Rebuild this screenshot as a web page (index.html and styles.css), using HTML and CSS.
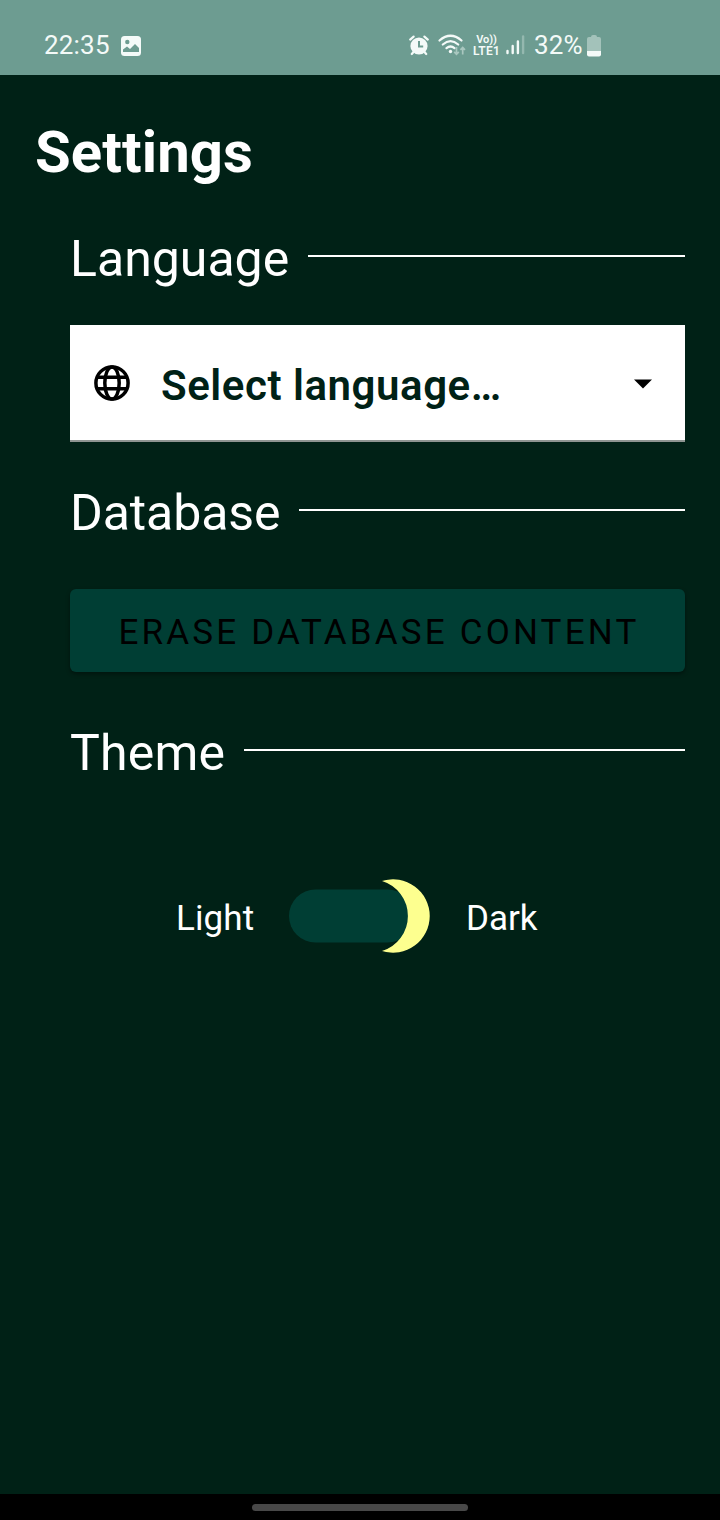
FILE: index.html
```html
<!DOCTYPE html>
<html lang="en">
<head>
<meta charset="utf-8">
<title>Settings</title>
<link rel="stylesheet" href="styles.css">
</head>
<body>
<div class="screen">
  <header class="status">
    <span class="clock">22:35</span>
    <svg class="picture" width="20" height="20" viewBox="0 0 20 20"><rect width="20" height="20" rx="3.5" fill="#f4faf8"/><circle cx="6.3" cy="6" r="2.2" fill="#6d9c91"/><path d="M2 16v-2.500l4-3 3 2.400 5-5 4 4v4.100z" fill="#6d9c91"/></svg>
    <svg class="alarm" width="20" height="21" viewBox="0 0 20 21"><circle cx="10" cy="11" r="8.6" fill="#f4faf8"/><path d="M1.200 4.600 4.600 1.600M18.800 4.600 15.400 1.600M4.500 17 2.800 19M15.500 17 17.200 19" stroke="#f4faf8" stroke-width="2.200" stroke-linecap="round"/><path d="M10 6v5.500h4.200" fill="none" stroke="#6d9c91" stroke-width="2"/></svg>
    <svg class="wifi" width="29" height="24" viewBox="0 0 29 24"><g fill="none" stroke="#f4faf8" stroke-width="2.200" stroke-linecap="round"><path d="M1.500 6.500q11-9.500 22 0M4.800 10.500q7.700-6.600 15.400 0M8.500 14.200q4-3.400 8 0"/></g><circle cx="12.500" cy="17.500" r="1.700" fill="#f4faf8"/><path d="M18.500 13v7M16.200 17.900l2.300 2.400 2.300-2.400M24.700 20.500v-7M22.400 15.800l2.300-2.400 2.300 2.400" fill="none" stroke="#a9c7bf" stroke-width="1.700"/></svg>
    <span class="volte"><span class="vo">Vo))</span><span>LTE1</span></span>
    <svg class="signal" width="19" height="20" viewBox="0 0 19 20"><g stroke-width="2.400" stroke-linecap="round" stroke="#f4faf8"><path d="M1.500 16v2M6.700 11v7M11.900 6.500v11.500"/><path d="M17.100 1.500v16.500" stroke="#94b8af"/></g></svg>
    <span class="percent">32%</span>
    <svg class="battery" width="14" height="22" viewBox="0 0 14 22"><path d="M4 2Q4 0 6 0h2q2 0 2 2h2q2 0 2 2v12H0V4q0-2 2-2z" fill="#a3c2ba"/><path d="M0 16h14v3.500q0 2-2 2H2q-2 0-2-2z" fill="#f4faf8"/></svg>
  </header>
  <main class="content">
    <h1 class="title">Settings</h1>
    <section class="group">
      <div class="heading"><h2 class="label language">Language</h2><span class="rule"></span></div>
      <div class="select">
        <svg class="globe" width="36" height="36" viewBox="0 0 36 36" fill="none" stroke="#000" stroke-width="3.500"><circle cx="18" cy="18" r="16.100"/><ellipse cx="18" cy="18" rx="7.200" ry="16.100"/><path d="M3 12.200h30M3 23.800h30"/></svg>
        <span class="choice">Select language…</span>
        <svg class="arrow" width="18" height="10" viewBox="0 0 18 10"><path d="M0 .4h18L9 9.400z" fill="#000"/></svg>
      </div>
    </section>
    <section class="group database-group">
      <div class="heading"><h2 class="label database">Database</h2><span class="rule"></span></div>
      <button class="erase">ERASE DATABASE CONTENT</button>
    </section>
    <section class="group theme-group">
      <div class="heading"><h2 class="label theme">Theme</h2><span class="rule"></span></div>
      <div class="toggle-row">
        <span class="mode light">Light</span>
        <svg class="toggle" width="141" height="74" viewBox="0 0 141 74"><rect x="0" y="10.500" width="125" height="53" rx="26.500" fill="#003e34"/><path d="M93 2A36.700 36.700 0 1 1 93 72A36.600 36.600 0 0 0 93 2z" fill="#fdff8f"/></svg>
        <span class="mode dark">Dark</span>
      </div>
    </section>
  </main>
  <footer class="navbar"><span class="handle"></span></footer>
</div>
</body>
</html>
```
FILE: styles.css
```css
* { box-sizing: border-box; }
body { margin: 0; background: #002116; font-family: Roboto, sans-serif; color: #fff; }
svg { display: block; flex: none; }
h1, h2 { margin: 0; font-weight: 400; }
.screen { width: 720px; height: 1520px; display: flex; flex-direction: column; background: #002116; }
.status { height: 75px; flex: none; display: flex; align-items: flex-start; background: #6d9c91; color: #f4faf8; white-space: nowrap; }
.clock { width: 77px; margin: 30px 0 0 44px; font-size: 26px; line-height: 30px; letter-spacing: .2px; }
.picture { margin-top: 36px; }
.alarm { margin: 35px 0 0 268px; }
.wifi { margin: 34px 0 0 9px; }
.volte { width: 27px; margin: 35px 0 0 6px; display: flex; flex-direction: column; align-items: center; font-size: 12px; font-weight: 600; line-height: 12px; letter-spacing: .2px; }
.vo { font-size: 11px; line-height: 10px; letter-spacing: -.1px; }
.signal { margin: 35px 0 0 6px; }
.percent { width: 53px; margin: 30px 0 0 9px; font-size: 26px; line-height: 30px; letter-spacing: .2px; }
.battery { margin-top: 35px; }
.content { flex: 1; padding: 41px 35px 0; }
.title { height: 72px; font-size: 58px; line-height: 72px; font-weight: 700; letter-spacing: .1px; }
.group { margin: 41px 0 0 35px; }
.heading { height: 60px; display: flex; align-items: center; gap: 18px; }
.label { font-size: 50px; line-height: 60px; white-space: nowrap; }
.language { width: 220px; }
.database { width: 211px; letter-spacing: -.1px; }
.theme { width: 156px; letter-spacing: .2px; }
.rule { flex: 1; height: 2px; margin-bottom: 6px; background: #fff; }
.select { height: 117px; margin-top: 36px; padding: 0 33px 0 24px; display: flex; align-items: center; background: #fff; border-bottom: 2px solid #8f9592; }
.choice { flex: 1; margin: 7px 0 0 31px; color: #002116; font-size: 42px; line-height: 50px; font-weight: 600; letter-spacing: .55px; white-space: nowrap; }
.arrow { margin-top: 2px; }
.database-group { margin-top: 41px; }
.erase { display: block; width: 100%; height: 83px; margin-top: 46px; padding: 5px 0 0 3px; border: 0; border-radius: 6px; background: #003e34; color: #000; box-shadow: 0 2px 4px rgba(0, 0, 0, .4); font: 450 35px/42px Roboto, sans-serif; letter-spacing: 3.2px; white-space: nowrap; }
.theme-group { margin-top: 51px; }
.toggle-row { height: 74px; margin-top: 96px; padding-left: 106px; display: flex; align-items: center; }
.mode { font-size: 35px; line-height: 42px; padding-top: 6px; letter-spacing: .1px; white-space: nowrap; }
.light { width: 113px; }
.dark { margin-left: 36px; letter-spacing: 0; }
.navbar { height: 26px; flex: none; display: flex; justify-content: center; align-items: center; background: #000; }
.handle { width: 216px; height: 7px; border-radius: 4px; background: #484848; }
```
